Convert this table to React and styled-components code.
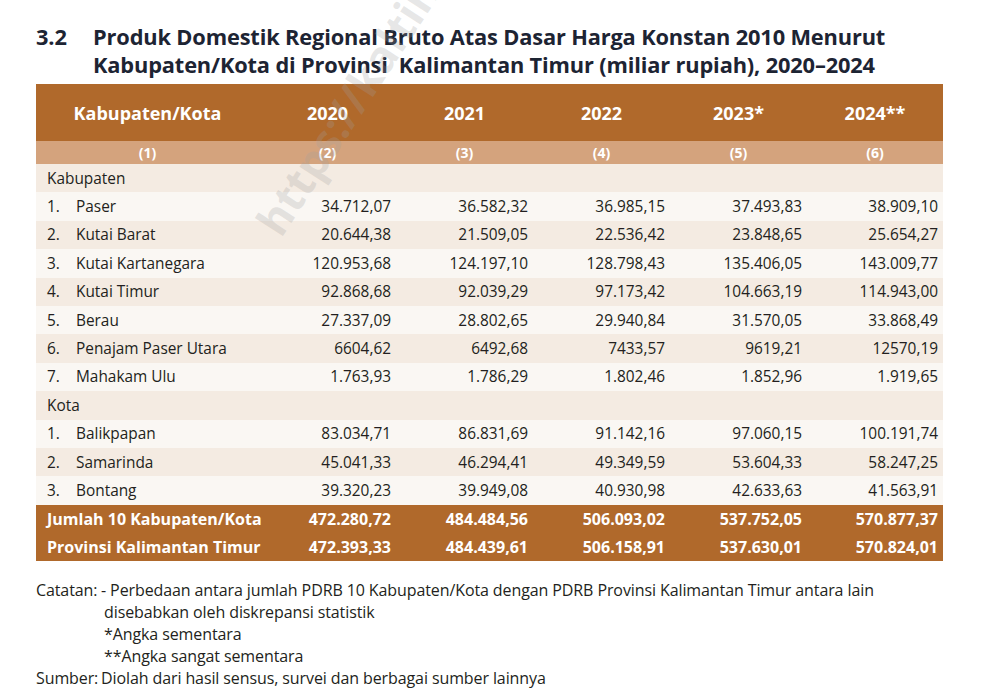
import React from "react";
import styled, { createGlobalStyle } from "styled-components";

const Colors = {
    brown: "#b0692b",
    tan: "#d4a37d",
    beige: "#f4ebe2",
    light: "#faf7f3",
    ink: "#231f20",
    title: "#1d2433",
};

const GlobalStyle = createGlobalStyle`
    body {
        margin: 0;
        background: #ffffff;
        font-family: "Open Sans", "Noto Sans", sans-serif;
        color: ${Colors.ink};
    }
`;

const Page = styled.div`
    position: relative;
    width: 984px;
    height: 700px;
    overflow: hidden;
    padding: 23px 41px 0 36px;
    box-sizing: border-box;
`;

const Title = styled.h1`
    display: grid;
    grid-template-columns: 57px 1fr;
    margin: 0 0 5px 0;
    font-size: 21.8px;
    line-height: 28px;
    font-weight: 700;
    color: ${Colors.title};
    letter-spacing: -0.15px;
`;

const Table = styled.div`
    display: flex;
    flex-direction: column;
    width: 907px;
`;

const Row = styled.div`
    display: grid;
    grid-template-columns: 223px repeat(4, 137px) 136px;
    align-items: center;
    height: ${(p) => p.$h || 28.4}px;
    background: ${(p) => p.$bg};
    color: ${(p) => p.$color || Colors.ink};
    font-weight: ${(p) => (p.$bold ? 700 : 400)};
    font-size: ${(p) => p.$size || 15.4}px;
`;

const HeadCell = styled.div`
    text-align: center;
`;

const NameCell = styled.div`
    display: flex;
    padding-left: 11px;
    white-space: nowrap;
`;

const Index = styled.span`
    width: 29px;
`;

const Value = styled.div`
    text-align: right;
    padding-right: 5px;
`;

const Notes = styled.div`
    margin-top: 19px;
    display: grid;
    grid-template-columns: 65px 1fr;
    font-size: 16px;
    line-height: 21.8px;
    color: ${Colors.ink};
    letter-spacing: -0.1px;
`;

const NoteLine = styled.div`
    padding-left: ${(p) => p.$indent || 0}px;
    white-space: nowrap;
`;

const Watermark = styled.div`
    position: absolute;
    left: 292px;
    top: 186px;
    transform-origin: 0 100%;
    transform: rotate(-57deg);
    font-size: 44px;
    font-weight: 700;
    color: rgba(160, 160, 160, 0.26);
    white-space: nowrap;
    pointer-events: none;
    font-family: "Open Sans", sans-serif;
`;

const years = ["2020", "2021", "2022", "2023*", "2024**"];

const kabupaten = [
    ["Paser", "34.712,07", "36.582,32", "36.985,15", "37.493,83", "38.909,10"],
    ["Kutai Barat", "20.644,38", "21.509,05", "22.536,42", "23.848,65", "25.654,27"],
    ["Kutai Kartanegara", "120.953,68", "124.197,10", "128.798,43", "135.406,05", "143.009,77"],
    ["Kutai Timur", "92.868,68", "92.039,29", "97.173,42", "104.663,19", "114.943,00"],
    ["Berau", "27.337,09", "28.802,65", "29.940,84", "31.570,05", "33.868,49"],
    ["Penajam Paser Utara", "6604,62", "6492,68", "7433,57", "9619,21", "12570,19"],
    ["Mahakam Ulu", "1.763,93", "1.786,29", "1.802,46", "1.852,96", "1.919,65"],
];

const kota = [
    ["Balikpapan", "83.034,71", "86.831,69", "91.142,16", "97.060,15", "100.191,74"],
    ["Samarinda", "45.041,33", "46.294,41", "49.349,59", "53.604,33", "58.247,25"],
    ["Bontang", "39.320,23", "39.949,08", "40.930,98", "42.633,63", "41.563,91"],
];

const totals = [
    ["Jumlah 10 Kabupaten/Kota", "472.280,72", "484.484,56", "506.093,02", "537.752,05", "570.877,37"],
    ["Provinsi Kalimantan Timur", "472.393,33", "484.439,61", "506.158,91", "537.630,01", "570.824,01"],
];

const body = [
    { group: "Kabupaten" },
    ...kabupaten.map((r, i) => ({ no: i + 1, row: r })),
    { group: "Kota" },
    ...kota.map((r, i) => ({ no: i + 1, row: r })),
];

export default function App() {
    return (
        <Page>
            <GlobalStyle />
            <Title>
                <span>3.2</span>
                <span>
                    Produk Domestik Regional Bruto Atas Dasar Harga Konstan 2010 Menurut
                    <br />
                    Kabupaten/Kota di Provinsi&nbsp; Kalimantan Timur (miliar rupiah), 2020–2024
                </span>
            </Title>

            <Table>
                <Row $h={57} $bg={Colors.brown} $color="#fff" $bold $size={18}>
                    <HeadCell>Kabupaten/Kota</HeadCell>
                    {years.map((y) => (
                        <HeadCell key={y}>{y}</HeadCell>
                    ))}
                </Row>
                <Row $h={23} $bg={Colors.tan} $color="#fff" $bold $size={14}>
                    {[1, 2, 3, 4, 5, 6].map((n) => (
                        <HeadCell key={n}>({n})</HeadCell>
                    ))}
                </Row>
                {body.map((item, i) => (
                    <Row key={i} $bg={i % 2 === 0 ? Colors.beige : Colors.light}>
                        {item.group ? (
                            <NameCell>{item.group}</NameCell>
                        ) : (
                            <>
                                <NameCell>
                                    <Index>{item.no}.</Index>
                                    {item.row[0]}
                                </NameCell>
                                {item.row.slice(1).map((v, j) => (
                                    <Value key={j}>{v}</Value>
                                ))}
                            </>
                        )}
                    </Row>
                ))}
                {totals.map((r) => (
                    <Row key={r[0]} $bg={Colors.brown} $color="#fff" $bold $size={16}>
                        <NameCell>{r[0]}</NameCell>
                        {r.slice(1).map((v, j) => (
                            <Value key={j}>{v}</Value>
                        ))}
                    </Row>
                ))}
            </Table>

            <Notes>
                <span>Catatan:</span>
                <div>
                    <NoteLine>- Perbedaan antara jumlah PDRB 10 Kabupaten/Kota dengan PDRB Provinsi Kalimantan Timur antara lain</NoteLine>
                    <NoteLine $indent={3}>disebabkan oleh diskrepansi statistik</NoteLine>
                    <NoteLine $indent={3}>*Angka sementara</NoteLine>
                    <NoteLine $indent={3}>**Angka sangat sementara</NoteLine>
                </div>
                <span>Sumber:</span>
                <NoteLine>Diolah dari hasil sensus, survei dan berbagai sumber lainnya</NoteLine>
            </Notes>

            <Watermark>https://kaltim.bps.go.id</Watermark>
        </Page>
    );
}
